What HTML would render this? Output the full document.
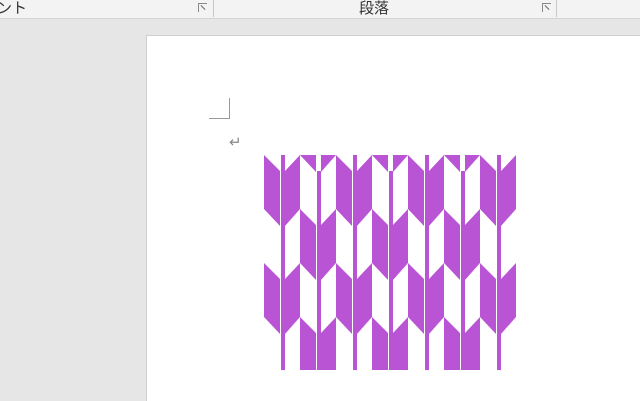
<!DOCTYPE html><html><head><style>
html,body{margin:0;width:640px;height:401px;overflow:hidden}
body{background:#e6e6e6;position:relative;font-family:"Liberation Sans","Noto Sans CJK JP",sans-serif}
.tb{position:absolute;left:0;top:0;width:640px;height:18px;background:#f3f3f3;border-bottom:1px solid #d4d4d4}
.t{position:absolute;top:-3px;font-size:15px;color:#333}
.sep{position:absolute;top:0;width:1px;height:17px;background:#c8c8c8}
.ic{position:absolute;top:3px;width:8px;height:8px;border:1px solid #888;border-right:none;border-bottom:none}
.ic:after{content:"";position:absolute;left:1px;top:3px;width:6px;height:1px;background:#666;transform:rotate(45deg)}
.page{position:absolute;left:146px;top:35px;width:500px;height:380px;background:#fff;border-left:1px solid #cfcfcf;border-top:1px solid #cfcfcf}
</style></head><body>
<div class="tb">
<span class="t" style="left:-3px">ント</span>
<div class="ic" style="left:198px"></div><div class="sep" style="left:213px"></div>
<span class="t" style="left:359px">段落</span>
<div class="ic" style="left:542px"></div><div class="sep" style="left:556px"></div>
</div>
<div class="page"></div>
<div style="position:absolute;left:209px;top:98px;width:20px;height:20px;border-right:1px solid #999;border-bottom:1px solid #999"></div>
<div style="position:absolute;left:229px;top:133px;font-size:15px;color:#888">↵</div>
<svg width="640" height="401" style="position:absolute;left:0;top:0">
<defs>
<clipPath id="c"><rect x="264" y="155" width="252" height="215"/></clipPath>
<g id="a">
<polygon points="0,0 16,16 16,71 0,54"/>
<polygon points="21,16 36,0 36,54 21,71"/>
</g>
</defs>
<g clip-path="url(#c)" fill="#b955d4">
<g id="col">
<use href="#a" x="264" y="155"/><use href="#a" x="264" y="263"/>
<use href="#a" x="300" y="101"/><use href="#a" x="300" y="209"/><use href="#a" x="300" y="317"/>
<rect x="281" y="155" width="4" height="215"/><rect x="317" y="171" width="4" height="199"/>
</g>
<use href="#col" x="72"/><use href="#col" x="144"/><use href="#col" x="216"/>
</g>
</svg>
</body></html>
